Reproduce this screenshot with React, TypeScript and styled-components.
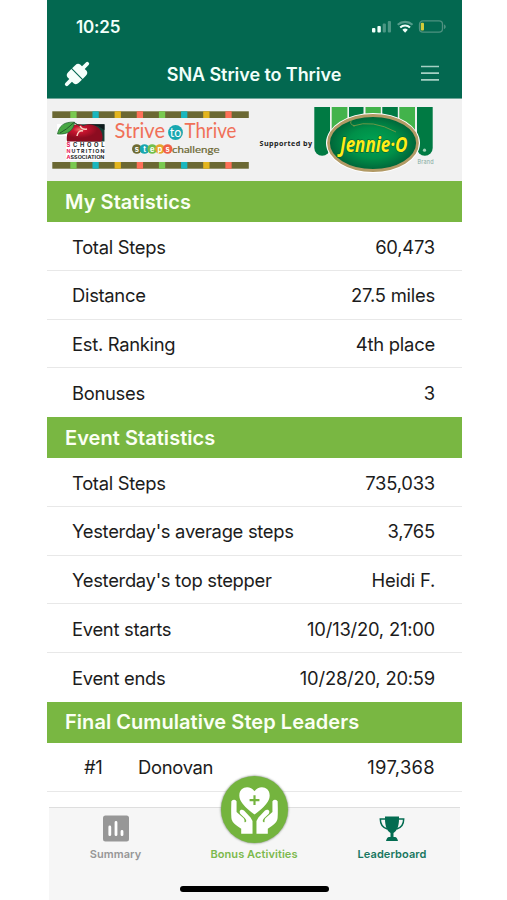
import React from 'react';
import styled, { createGlobalStyle, css } from 'styled-components';

const GlobalStyle = createGlobalStyle`
  body { margin: 0; background: #fff; }
  * { box-sizing: border-box; }
`;

const Screen = styled.main`
  width: 415px;
  height: 900px;
  margin-left: 47px;
  display: flex;
  flex-direction: column;
  overflow: hidden;
  font-family: Inter, 'Liberation Sans', sans-serif;
  color: #1c1c1c;
  background: #fff;
`;

const Header = styled.header`
  height: 98px;
  flex: none;
  background: #036850;
  color: #f2fffa;
`;

const StatusBar = styled.div`
  height: 51px;
  padding: 2px 15px 0 29px;
  display: flex;
  align-items: center;
  justify-content: space-between;
`;

const Clock = styled.span`
  font-size: 17px;
  font-weight: 600;
  letter-spacing: -0.15px;
`;

const TitleBar = styled.div`
  height: 46px;
  padding: 0 22px 0 16px;
  display: grid;
  grid-template-columns: 28px 1fr 20px;
  align-items: center;
`;

const Title = styled.h1`
  margin: 0 3px 0 0;
  font-size: 18px;
  font-weight: 600;
  letter-spacing: -0.08px;
  text-align: center;
  white-space: nowrap;
`;

const Banner = styled.div`
  height: 83px;
  flex: none;
  background: #f1f1f1;
  border-top: 1px solid #6fa598;
  svg { display: block; margin-top: -1px; }
`;

const SectionTitle = styled.h2`
  height: 41px;
  margin: 0;
  padding: 0 18px;
  display: flex;
  align-items: center;
  background: #79b742;
  color: #fbfff4;
  font-size: 20px;
  font-weight: 600;
  letter-spacing: 0.05px;
  white-space: nowrap;
`;

const Row = styled.div<{ $last?: boolean }>`
  height: 48.75px;
  padding: 1.5px 27px 0 25px;
  display: flex;
  align-items: center;
  font-size: 18.4px;
  letter-spacing: -0.3px;
  white-space: nowrap;
  ${p => !p.$last && css`border-bottom: 1px solid #e8e8e8;`}
`;

const Value = styled.span<{ $wide?: boolean }>`
  margin-left: auto;
  letter-spacing: ${p => (p.$wide ? '0.3px' : '-0.22px')};
`;

const Rank = styled.span`
  width: 66px;
  padding-left: 12px;
`;

const Tabs = styled.nav`
  height: 93px;
  flex: none;
  margin: auto 2px 0;
  display: grid;
  grid-template-columns: 133px 144px 132px;
  grid-template-rows: 58px 1fr;
  background: #f6f6f6;
  border-top: 1px solid #dedede;
`;

const Tab = styled.div<{ $color: string }>`
  display: flex;
  flex-direction: column;
  align-items: center;
  justify-content: flex-end;
  color: ${p => p.$color};
  font-size: 11px;
  font-weight: 600;
  letter-spacing: 0.08px;
  white-space: nowrap;
  svg { flex: none; }
`;

const TabLabel = styled.span`
  height: 24px;
  line-height: 24px;
`;

const Bubble = styled.div`
  width: 67px;
  height: 67px;
  flex: none;
  border-radius: 50%;
  background: #74b43e;
  box-shadow: 0 0 2px 0.5px rgba(80, 95, 75, 0.6);
  margin-bottom: -1px;
  svg { display: block; }
`;

const HomeBar = styled.div`
  grid-column: 1 / -1;
  justify-self: center;
  align-self: center;
  width: 149px;
  height: 6px;
  margin: 11px 0 0 2px;
  border-radius: 3px;
  background: #000;
`;

const StatusIcons = () => (
  <svg width="76" height="16" viewBox="0 0 76 16">
    <g fill="#f2fffa">
      <rect x="1" y="9" width="3.4" height="4.5" rx="1" />
      <rect x="6.4" y="7" width="3.4" height="6.5" rx="1" />
      <g opacity=".3">
        <rect x="11.7" y="4.5" width="3.2" height="9" rx="1" />
        <rect x="16.8" y="2" width="3.2" height="11.5" rx="1" />
      </g>
    </g>
    <g fill="none" stroke="#f2fffa" strokeWidth="2.1">
      <path d="M26.7 5.7a11.2 11.2 0 0 1 14.8 0" opacity=".35" />
      <path d="M29.2 8.4a7.2 7.2 0 0 1 9.8 0" />
    </g>
    <path d="M31.4 10.7a4 4 0 0 1 5.4 0l-2.7 3z" fill="#f2fffa" />
    <rect x="48.5" y="1.9" width="23" height="11.3" rx="3.4" fill="none" stroke="#4f9180" strokeWidth="1.3" />
    <path d="M73 5.5v4.5c2.3-.7 2.3-3.8 0-4.5z" fill="#4f9180" />
    <rect x="49.8" y="3.8" width="3.2" height="7.7" rx="1" fill="#d3cb3a" />
  </svg>
);

const PlugIcon = () => (
  <svg width="28" height="28" viewBox="-14 -14 28 28">
    <g transform="rotate(-45)" fill="#f5fffb">
      <path d="M-14.500-1.9H-9V-4.500Q-8.500-7.500-5-7.500H-.5V7.500H-5Q-8.500 7.500-9 4.500V1.9H-14.500A1.9 1.9 0 0 1-14.500-1.900z" />
      <path d="M.6-7.500H5Q8.500-7.500 9-4.500V-1.9H14.5A1.9 1.9 0 0 1 14.5 1.9H9V4.500Q8.500 7.500 5 7.500H.6z" />
    </g>
  </svg>
);

const MenuIcon = () => (
  <svg width="20" height="18" viewBox="0 0 20 18">
    <path d="M1 1.500h18M1 8.100h18M1 14.900h18" stroke="#a5d0c3" strokeWidth="1.7" />
  </svg>
);

const SummaryIcon = () => (
  <svg width="28" height="28" viewBox="0 0 28 28">
    <rect x="1" y="1.500" width="26" height="26" rx="2.5" fill="#979797" />
    <path d="M7.800 13v7.700M14 8.500v12.200M20 17.500v3.200" stroke="#fff" strokeWidth="2.800" strokeLinecap="round" />
  </svg>
);

const TrophyIcon = () => (
  <svg width="26" height="26" viewBox="0 0 26 26" fill="#036c51">
    <path d="M6 .5h14V3c0 7-2 12-5.500 14v4h1.500q2 0 3 4H7q1-4 3-4h1.500v-4C8 15 6 10 6 3z" />
    <path d="M6.500 3H1.300c0 5 2.800 8.800 7 10M19.500 3h5.200c0 5-2.800 8.800-7 10" fill="none" stroke="#036c51" strokeWidth="1.500" />
  </svg>
);

const Hand = () => (
  <path d="M10.500 25.500Q13.300 22.500 15.800 25.500V36.500L23 43Q24.600 45.500 23.800 46.600Q24.600 47.500 25.600 46Q26 44.500 24.300 42.800L19.500 38.200Q18 35.500 20.300 34.300Q22 33.700 23.600 35.200L30 42Q32.500 45 32 48.500V58.500H20.500V53.500Q12 48.500 10.900 44.500Q10 42 10.500 25.500z" />
);

const CareIcon = () => (
  <svg width="67" height="67" viewBox="0 0 68 68" fill="#fff">
    <path d="M34 39Q18.600 28 18.600 20C18.500 10.500 29.500 9 34 15.500C38.500 9 49.500 10.500 49.400 20Q49.400 28 34 39z" />
    <path d="M34 19.500v10M29 24.500h10" stroke="#74b43e" strokeWidth="2.200" />
    <Hand />
    <g transform="translate(68 0) scale(-1 1)"><Hand /></g>
  </svg>
);

const beads = [
  ['s', '#6e6b32'], ['t', '#18a7af'], ['e', '#71bf4b'], ['p', '#e5a52c'], ['s', '#ef6047'],
];
const accents = ['#79c94f', '#18b6bf', '#e3b51e', '#ff7058'];

const SponsorBanner = () => (
  <svg width="415" height="83" viewBox="47 98 415 83">
    <defs>
      <radialGradient id="badge">
        <stop offset="0" stopColor="#00a454" />
        <stop offset=".55" stopColor="#009049" />
        <stop offset="1" stopColor="#006338" />
      </radialGradient>
      <radialGradient id="apple" cx=".35" cy=".3">
        <stop offset="0" stopColor="#ed6c62" />
        <stop offset=".35" stopColor="#c9142f" />
        <stop offset="1" stopColor="#8c0c20" />
      </radialGradient>
    </defs>
    {[111.3, 162].map(y => (
      <g key={y}>
        <rect x="52.300" y={y} width="196.500" height="6.700" fill="#6b6833" />
        {Array.from({ length: 8 }, (_, i) => (
          <rect key={i} x={70.300 + i * 22.150} y={y} width="6.300" height="6.700" fill={accents[i % 4]} />
        ))}
      </g>
    ))}
    <path d="M57 124H105V160H66V136H57z" fill="#fff" />
    <rect x="76" y="124.300" width="28.500" height="17.200" fill="#173f36" />
    <path d="M84 124.300h20.500V130L98 126z" fill="#101b1c" />
    <path d="M67 141.500C66 136 68 129 72 126C76 123.500 81 124 83 126C89 122.500 98 125 101 131C103 135 103 139 101.500 141.500z" fill="url(#apple)" />
    <path d="M77 136Q78 130 83 131M80 126q2 4 7 3" stroke="#fbd1c4" strokeWidth="1.500" fill="none" />
    <path d="M57.500 134C59 126 64 121.500 74.500 122.200C74 129 69 135 57.500 134z" fill="#48a743" stroke="#2a6936" strokeWidth=".8" />
    <path d="M60 133Q66 130 74 122.500L80 126" stroke="#24582c" fill="none" />
    <g fontFamily="Inter, sans-serif" fontWeight="700" fill="#24272a">
      <text x="66.500" y="147" fontSize="5.800" textLength="38"><tspan fill="#e91d5b">S</tspan>CHOOL</text>
      <text x="66.500" y="152.900" fontSize="5.300" textLength="38"><tspan fill="#e91d5b">N</tspan>UTRITION</text>
      <text x="66.500" y="158.500" fontSize="4.600" textLength="38" lengthAdjust="spacingAndGlyphs"><tspan fill="#e91d5b">A</tspan>SSOCIATION</text>
    </g>
    <g fontFamily="Lato, sans-serif" fill="#f07058" fontSize="21">
      <text x="114.500" y="138" textLength="50.500" lengthAdjust="spacingAndGlyphs">Strive</text>
      <text x="184.500" y="138" textLength="52" lengthAdjust="spacingAndGlyphs">Thrive</text>
    </g>
    <circle cx="175.500" cy="132.500" r="7.400" fill="#18a7af" />
    <text x="175.500" y="136.500" fontFamily="Lato, sans-serif" fontSize="12.500" textAnchor="middle" fill="#fff">to</text>
    {beads.map(([letter, color], i) => (
      <g key={i}>
        <circle cx={136.800 + i * 7.700} cy="149" r="4.800" fill={color} />
        <text x={136.800 + i * 7.700} y="151.700" fontFamily="Inter, sans-serif" fontWeight="700" fontSize="7.500" textAnchor="middle" fill="#fff">{letter}</text>
      </g>
    ))}
    <text x="172" y="152.500" fontFamily="Lato, sans-serif" fontSize="10.300" fill="#6b6833" stroke="#6b6833" strokeWidth=".2" textLength="47.500" lengthAdjust="spacingAndGlyphs">challenge</text>
    <text x="259.500" y="145.500" fontFamily="'Open Sans', sans-serif" fontWeight="700" fontSize="7.200" fill="#222" textLength="52.500">Supported by</text>
    <g fill="#007a43">
      <path d="M314.300 107H330v41a7.850 7.850 0 0 1-15.700 0z" />
      <path d="M349 107h14.500v25H349zM382.300 107h15.500v25h-15.500z" />
      <path d="M417 107h15.700v41a7.850 7.850 0 0 1-15.700 0z" />
    </g>
    <path d="M331.700 107h15.700v25h-15.700zM365.500 107h15.300v25h-15.300zM399.300 107h15.700v25h-15.700z" fill="#42b34b" />
    <ellipse cx="373" cy="143" rx="47" ry="30" fill="#fff" />
    <ellipse cx="373" cy="143" rx="44.500" ry="27.500" fill="url(#badge)" stroke="#b29a65" strokeWidth="2.800" />
    <path d="M353 126Q372 119 396 132M355 126Q348 124 352 120" fill="none" stroke="#789945" strokeWidth=".9" />
    <text x="340" y="151.500" fontFamily="'Open Sans', sans-serif" fontWeight="700" fontStyle="italic" fontSize="21.500" textLength="67.500" lengthAdjust="spacingAndGlyphs" fill="#ffed18" stroke="#07542d" strokeWidth="1" paintOrder="stroke">Jennie·O</text>
    <circle cx="424.500" cy="150.200" r="1.600" fill="#9cd0b4" />
    <text x="417.500" y="164" fontFamily="Inter, sans-serif" fontSize="5.500" fill="#83aaa0" textLength="16">Brand</text>
  </svg>
);

const myStats = [['Total Steps', '60,473'], ['Distance', '27.5 miles'], ['Est. Ranking', '4th place'], ['Bonuses', '3']];
const eventStats = [
  ['Total Steps', '735,033'],
  ["Yesterday's average steps", '3,765'],
  ["Yesterday's top stepper", 'Heidi F.'],
  ['Event starts', '10/13/20, 21:00'],
  ['Event ends', '10/28/20, 20:59'],
];

const StatSection = ({ title, rows }: { title: string; rows: string[][] }) => (
  <section>
    <SectionTitle>{title}</SectionTitle>
    {rows.map(([label, value], i) => (
      <Row key={label} $last={i === rows.length - 1}>
        <span>{label}</span>
        <Value>{value}</Value>
      </Row>
    ))}
  </section>
);

export default function App() {
  return (
    <>
      <GlobalStyle />
      <Screen>
        <Header>
          <StatusBar><Clock>10:25</Clock><StatusIcons /></StatusBar>
          <TitleBar><PlugIcon /><Title>SNA Strive to Thrive</Title><MenuIcon /></TitleBar>
        </Header>
        <Banner><SponsorBanner /></Banner>
        <StatSection title="My Statistics" rows={myStats} />
        <StatSection title="Event Statistics" rows={eventStats} />
        <section>
          <SectionTitle>Final Cumulative Step Leaders</SectionTitle>
          <Row><Rank>#1</Rank><span>Donovan</span><Value $wide>197,368</Value></Row>
        </section>
        <Tabs>
          <Tab $color="#979797"><SummaryIcon /><TabLabel>Summary</TabLabel></Tab>
          <Tab $color="#7cb94d"><Bubble><CareIcon /></Bubble><TabLabel>Bonus Activities</TabLabel></Tab>
          <Tab $color="#18775f"><TrophyIcon /><TabLabel>Leaderboard</TabLabel></Tab>
          <HomeBar />
        </Tabs>
      </Screen>
    </>
  );
}
